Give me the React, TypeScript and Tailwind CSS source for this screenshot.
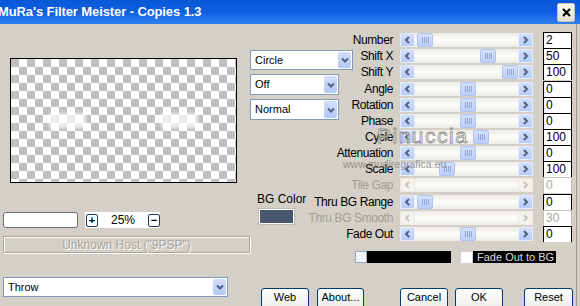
import React from "react";

const rows = [
  { label: "Number", value: "2", pos: 2 },
  { label: "Shift X", value: "50", pos: 65 },
  { label: "Shift Y", value: "100", pos: 87 },
  { label: "Angle", value: "0", pos: 45 },
  { label: "Rotation", value: "0", pos: 45 },
  { label: "Phase", value: "0", pos: 45 },
  { label: "Cycle", value: "100", pos: 58 },
  { label: "Attenuation", value: "0", pos: 45 },
  { label: "Scale", value: "100", pos: 24 },
  { label: "Tile Gap", value: "0", disabled: true },
  { label: "Thru BG Range", value: "0", pos: 2 },
  { label: "Thru BG Smooth", value: "30", disabled: true },
  { label: "Fade Out", value: "0", pos: 45 },
];

function Arrow({ dir, disabled }: { dir: "left" | "right" | "down"; disabled?: boolean }) {
  const d = dir === "left" ? "M6 2 L3 5 L6 8" : dir === "right" ? "M3 2 L6 5 L3 8" : "M2 3.5 L5 6.5 L8 3.5";
  return (
    <svg width="9" height="10" viewBox="0 0 9 10">
      <path d={d} fill="none" stroke={disabled ? "#c8c6bc" : "#4d6185"} strokeWidth="2" />
    </svg>
  );
}

function ArrowBtn({ dir, disabled }: { dir: "left" | "right"; disabled?: boolean }) {
  return (
    <div
      className={
        "w-[15px] h-[14px] rounded-[2px] flex items-center justify-center border " +
        (disabled
          ? "bg-[#f3f2ec] border-[#eceae2]"
          : "bg-gradient-to-b from-[#d3defb] to-[#b8ccf7] border-[#e6edfd]")
      }
    >
      <Arrow dir={dir} disabled={disabled} />
    </div>
  );
}

function Scroll({ pos, disabled }: { pos?: number; disabled?: boolean }) {
  return (
    <div className="w-[133px] h-[14px] flex items-center bg-gradient-to-b from-[#ecebe4] via-[#fdfdfb] to-[#ecebe4]">
      <ArrowBtn dir="left" disabled={disabled} />
      <div className="flex-1 h-full flex items-center">
        {!disabled && (
          <div
            className="w-[16px] h-[14px] rounded-[2px] bg-gradient-to-b from-[#d5e0fc] to-[#bccef8] border border-[#b0c4f2] flex items-center justify-center gap-[1px]"
            style={{ marginLeft: pos }}
          >
            <span className="w-[1px] h-[6px] bg-[#8ea6e0]" />
            <span className="w-[1px] h-[6px] bg-[#8ea6e0]" />
            <span className="w-[1px] h-[6px] bg-[#8ea6e0]" />
            <span className="w-[1px] h-[6px] bg-[#8ea6e0]" />
          </div>
        )}
      </div>
      <ArrowBtn dir="right" disabled={disabled} />
    </div>
  );
}

function Select({ text, w, h = "h-[20px]" }: { text: string; w: string; h?: string }) {
  return (
    <div className={`${w} ${h} bg-white border border-[#7f9db9] flex items-stretch`}>
      <span className="flex-1 pl-[4px] text-[11px] leading-none flex items-center text-black">{text}</span>
      <div className="w-[13px] m-[1px] rounded-[2px] bg-gradient-to-b from-[#d3defb] to-[#b4c8f6] flex items-center justify-center">
        <Arrow dir="down" />
      </div>
    </div>
  );
}

function Btn({ text, w }: { text: string; w: string }) {
  return (
    <div
      className={`${w} h-[23px] rounded-[3px] border border-[#003c74] bg-gradient-to-b from-white to-[#ecebe6] flex items-center justify-center text-[11px] text-black pb-[5px]`}
    >
      {text}
    </div>
  );
}

export default function App() {
  return (
    <div className="w-[580px] h-[306px] overflow-hidden flex flex-col bg-[#d4d0c8] font-['Liberation_Sans',Arial,sans-serif] text-[11px] select-none">
      {/* title bar */}
      <div className="h-[24px] shrink-0 flex items-center justify-between bg-gradient-to-b from-[#0a58d6] via-[#0d5fe0] to-[#2f7ff0]">
        <span className="-ml-[2px] text-white font-bold text-[13px] tracking-[-0.1px]">MuRa's Filter Meister - Copies 1.3</span>
        <div className="w-[18px] h-[19px] mr-[5px] rounded-[2px] border border-[#c9c5b8] bg-gradient-to-b from-[#fbfaf6] to-[#e3dfd2] flex items-center justify-center">
          <svg width="9" height="9" viewBox="0 0 9 9">
            <path d="M1 1 L8 8 M8 1 L1 8" stroke="#000" strokeWidth="2.2" />
          </svg>
        </div>
      </div>

      {/* body */}
      <div className="flex-1 flex relative border-r border-[#9c9a92] mr-[3px]">
        {/* left column */}
        <div className="w-[250px] pl-[3px] flex flex-col">
          <div className="ml-[7px] mt-[34px] w-[227px] h-[125px] border border-black relative bg-[conic-gradient(#fff_25%,#c0c0c0_0_50%,#fff_0_75%,#c0c0c0_0)] bg-[length:16px_16px]">
            <div className="absolute left-[38px] top-[54px] w-[37px] h-[15px] bg-white/70 blur-[1.5px]" />
            <div className="absolute left-[150px] top-[54px] w-[37px] h-[15px] bg-white/70 blur-[1.5px]" />
          </div>

          <div className="mt-[29px] h-[16px] flex items-center">
            <div className="w-[75px] h-[16px] rounded-[3px] border border-[#6f6f6f] bg-white" />
            <div className="ml-[7px] w-[75px] h-[16px] bg-white flex items-center">
              <div className="ml-[1px] w-[12px] h-[13px] rounded-[2px] border border-[#1c3b5c] flex items-center justify-center text-[11px] leading-none font-bold">+</div>
              <span className="ml-[13px] text-[12px]">25%</span>
              <div className="ml-[13px] w-[12px] h-[13px] rounded-[2px] border border-[#1c3b5c] flex items-center justify-center text-[11px] leading-none font-bold">−</div>
            </div>
          </div>

          <div className="mt-[8px] w-[247px] h-[17px] border border-[#a8a59c] shadow-[inset_1px_1px_0_#fff,1px_1px_0_#fff] flex items-center justify-center text-[12px] text-[#a7a49a] [text-shadow:1px_1px_0_#fff]">
            Unknown Host ("9PSP")
          </div>

          <div className="mt-[24px]">
            <Select text="Throw" w="w-[225px]" />
          </div>
        </div>

        {/* right block */}
        <div className="flex-1 flex flex-col">
          <div className="flex">
            {/* middle column */}
            <div className="w-[55px] flex flex-col">
              <div className="mt-[26px] relative z-10">
                <Select text="Circle" w="w-[103px]" h="h-[20px]" />
              </div>
              <div className="mt-[4px]">
                <Select text="Off" w="w-[89px]" h="h-[21px]" />
              </div>
              <div className="mt-[4px]">
                <Select text="Normal" w="w-[89px]" h="h-[21px]" />
              </div>
              <div className="mt-[72px] ml-[7px] whitespace-nowrap text-[12px] leading-[14px]">BG Color</div>
              <div className="mt-[3px] ml-[9px] w-[35px] h-[15px] bg-[#49566f] border border-white shadow-[0_0_0_1px_#bdbab0]" />
            </div>

            {/* sliders column */}
            <div className="pt-[8px] flex flex-col">
              {rows.map((r) => (
                <div key={r.label} className="h-[16.17px] flex items-center">
                  <span
                    className={
                      "w-[88px] text-right whitespace-nowrap text-[12px] tracking-[-0.4px] leading-none " +
                      (r.disabled ? "text-[#a19e94]" : "text-black")
                    }
                  >
                    {r.label}
                  </span>
                  <div className="ml-[7px]">
                    <Scroll pos={r.pos} disabled={r.disabled} />
                  </div>
                  <div
                    className={
                      "ml-[10px] w-[29px] h-[16px] bg-white border-t border-l border-r pl-[2px] text-[12px] leading-[15px] " +
                      (r.disabled ? "border-[#c4c1b8] text-[#a9a69c]" : "border-black text-black")
                    }
                  >
                    {r.value}
                  </div>
                </div>
              ))}
            </div>
          </div>

          {/* fade row */}
          <div className="mt-[9px] ml-[105px] h-[12px] flex items-center">
            <div className="w-[12px] h-[12px] bg-[#eef4f8] border border-[#9ab]" />
            <div className="w-[84px] h-[12px] bg-black" />
            <div className="ml-[10px] w-[11px] h-[11px] bg-white" />
            <div className="ml-[1px] w-[83px] h-[12px] bg-black text-[#d8d8d8] text-[11px] leading-[12px] pl-[4px] whitespace-nowrap">
              Fade Out to BG
            </div>
          </div>

          {/* buttons */}
          <div className="mt-[25px] flex">
            <div className="ml-[11px]"><Btn text="Web" w="w-[48px]" /></div>
            <div className="ml-[8px]"><Btn text="About..." w="w-[47px]" /></div>
            <div className="ml-[36px]"><Btn text="Cancel" w="w-[48px]" /></div>
            <div className="ml-[7px]"><Btn text="OK" w="w-[48px]" /></div>
            <div className="ml-[21px]"><Btn text="Reset" w="w-[49px]" /></div>
          </div>
        </div>

        {/* watermark */}
        <div className="absolute left-[377px] top-[101px] text-[21px] leading-none tracking-[1.5px] text-white/50 [-webkit-text-stroke:0.8px_#8a8880] pointer-events-none">
          Pinuccia
        </div>
        <div className="absolute left-[343px] top-[133px] text-[10.5px] text-[#85827a]/80 pointer-events-none whitespace-nowrap">
          www.mudiregrafica.eu
        </div>
      </div>
    </div>
  );
}
